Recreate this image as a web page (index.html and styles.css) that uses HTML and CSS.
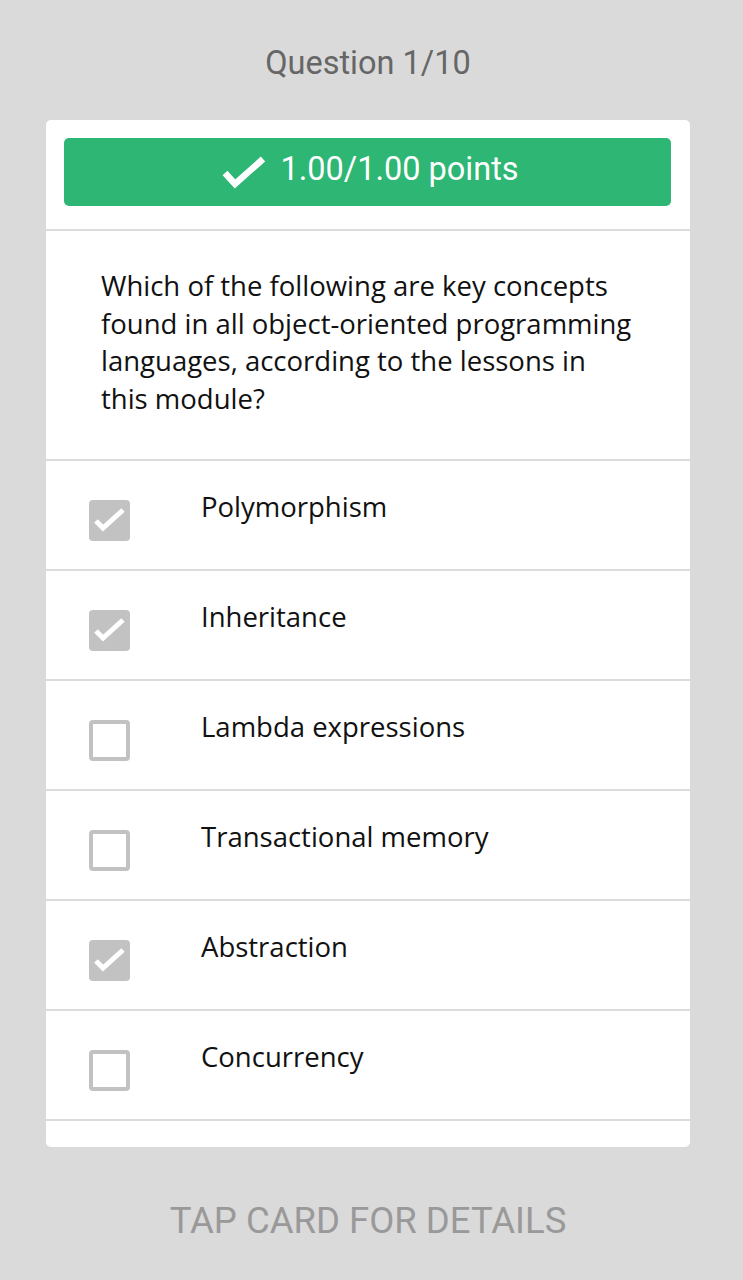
FILE: index.html
```html
<!DOCTYPE html>
<html>
<head>
<meta charset="utf-8">
<link rel="stylesheet" href="styles.css">
</head>
<body>
<div class="page">
  <div class="title">Question 1/10</div>
  <div class="card">
    <div class="score-wrap">
      <div class="score">
        <svg class="score-check" width="44" height="36" viewBox="0 0 44 36"><path d="M3 17 L13 28 L41 3" fill="none" stroke="#fff" stroke-width="6.5"/></svg>
        <span>1.00/1.00 points</span>
      </div>
    </div>
    <div class="question">Which of the following are key concepts found in all object-oriented programming languages, according to the lessons in this module?</div>
    <div class="option"><span class="box checked"><svg width="41" height="41" viewBox="0 0 41 41"><path d="M7 21 L14 28 L34 10" fill="none" stroke="#fff" stroke-width="5"/></svg></span><span class="label">Polymorphism</span></div>
    <div class="option"><span class="box checked"><svg width="41" height="41" viewBox="0 0 41 41"><path d="M7 21 L14 28 L34 10" fill="none" stroke="#fff" stroke-width="5"/></svg></span><span class="label">Inheritance</span></div>
    <div class="option"><span class="box"></span><span class="label">Lambda expressions</span></div>
    <div class="option"><span class="box"></span><span class="label">Transactional memory</span></div>
    <div class="option"><span class="box checked"><svg width="41" height="41" viewBox="0 0 41 41"><path d="M7 21 L14 28 L34 10" fill="none" stroke="#fff" stroke-width="5"/></svg></span><span class="label">Abstraction</span></div>
    <div class="option"><span class="box"></span><span class="label">Concurrency</span></div>
    <div class="spacer"></div>
  </div>
  <div class="footer">TAP CARD FOR DETAILS</div>
</div>
</body>
</html>
```
FILE: styles.css
```css
html, body {
  margin: 0;
  padding: 0;
  background: #dadada;
}
.page {
  width: 644px;
  height: 1280px;
  padding-left: 46px;
  display: flex;
  flex-direction: column;
  align-items: center;
}
.title {
  font-family: Roboto, sans-serif;
  font-size: 32.5px;
  line-height: 1;
  color: #666;
  height: 120px;
  box-sizing: border-box;
  padding-top: 47px;
}
.card {
  width: 644px;
  background: #fff;
  border-radius: 5px;
  display: flex;
  flex-direction: column;
}
.score-wrap {
  padding: 18px 19px 23px 18px;
  border-bottom: 2px solid #dcdcdc;
}
.score {
  height: 68px;
  background: #2db674;
  border-radius: 5px;
  display: flex;
  align-items: center;
  justify-content: center;
  gap: 14px;
  color: #fff;
  font-family: Roboto, sans-serif;
  font-size: 32.5px;
  line-height: 1;
  padding-bottom: 6px;
  padding-left: 6px;
  box-sizing: border-box;
}
.score-check {
  margin-top: 10px;
}
.question {
  font-family: "Open Sans", sans-serif;
  font-size: 27.5px;
  line-height: 37.5px;
  color: #111;
  padding: 36px 56px 42px 55px;
  border-bottom: 2px solid #dcdcdc;
}
.option {
  height: 108px;
  border-bottom: 2px solid #dcdcdc;
  display: flex;
  align-items: flex-start;
}
.box {
  width: 41px;
  height: 41px;
  box-sizing: border-box;
  border: 4px solid #c2c2c2;
  border-radius: 4px;
  margin: 39px 71px 0 43px;
  flex: none;
}
.box.checked {
  background: #c2c2c2;
  border: none;
}
.box svg {
  display: block;
}
.label {
  font-family: "Open Sans", sans-serif;
  font-size: 27.5px;
  line-height: 36px;
  color: #111;
  margin-top: 28px;
}
.spacer {
  height: 26px;
}
.footer {
  font-family: Roboto, sans-serif;
  font-size: 36.5px;
  color: #999;
  margin-top: 52px;
}
```
